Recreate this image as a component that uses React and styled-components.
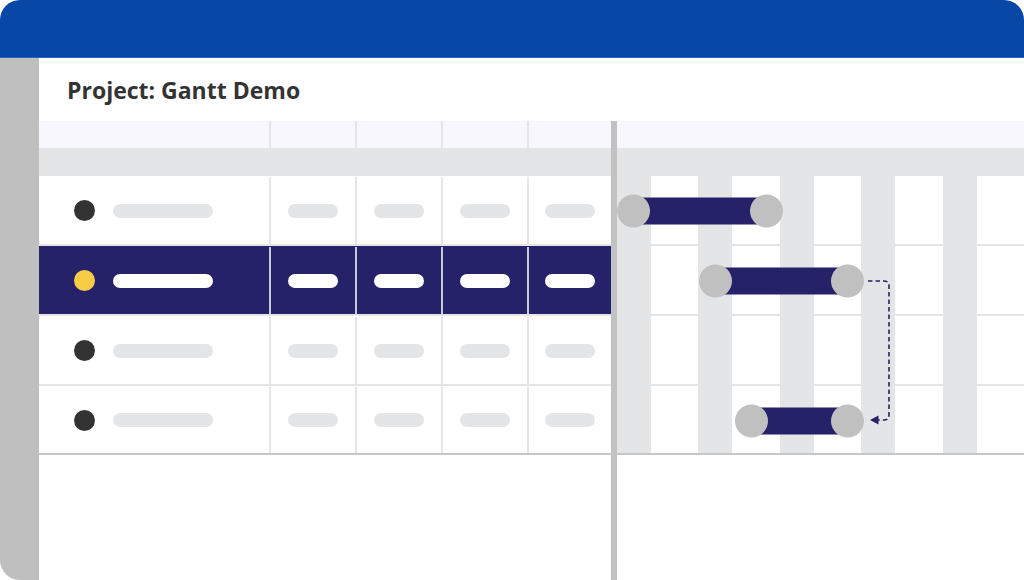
import React from "react";
import styled, { createGlobalStyle } from "styled-components";

const Global = createGlobalStyle`
  html, body { margin: 0; padding: 0; background: #ffffff; }
  body { font-family: "Open Sans", "Liberation Sans", sans-serif; }
  * { box-sizing: border-box; }
`;

const NAVY = "#25226a";
const LINE = "#e4e5e7";
const DARK_LINE = "#c7c7c7";
const KNOB = "#c0c0c0";

const Card = styled.div`
  width: 1024px;
  height: 580px;
  display: flex;
  flex-direction: column;
  border-radius: 20px 20px 0 20px;
  overflow: hidden;
  background: #ffffff;
`;

const TopBar = styled.header`
  height: 58px;
  flex: none;
  background: #0747a6;
  border-bottom: 1px solid #2a62b8;
`;

const Body = styled.div`
  flex: 1;
  display: flex;
  min-height: 0;
`;

const Sidebar = styled.aside`
  width: 39px;
  flex: none;
  background: #bfbfbf;
`;

const Main = styled.main`
  flex: 1;
  display: flex;
  flex-direction: column;
  min-width: 0;
`;

const TitleBar = styled.div`
  height: 63px;
  flex: none;
  display: flex;
  align-items: center;
  padding-left: 28px;
`;

const Title = styled.h1`
  margin: 0;
  font-family: "Open Sans", "Liberation Sans", sans-serif;
  font-weight: 700;
  font-size: 23px;
  line-height: 30px;
  color: #333333;
`;

const Workspace = styled.div`
  flex: 1;
  display: flex;
  min-height: 0;
`;

const TablePanel = styled.section`
  width: 572px;
  flex: none;
  display: flex;
  flex-direction: column;
`;

const Splitter = styled.div`
  width: 6px;
  flex: none;
  background: #c2c2c2;
`;

const GanttPanel = styled.section`
  flex: 1;
  display: flex;
  flex-direction: column;
  min-width: 0;
`;

const COLS = "230px 86px 86px 86px 84px";

const HeadRow = styled.div`
  height: 27px;
  flex: none;
  background: #f8f7fd;
  display: ${(p) => (p.$grid ? "grid" : "block")};
  grid-template-columns: ${COLS};
`;

const HeadCell = styled.div`
  border-left: ${(p) => (p.$first ? "none" : `2px solid ${LINE}`)};
`;

const SubHead = styled.div`
  height: 28px;
  flex: none;
  background: ${LINE};
`;

const Row = styled.div`
  height: ${(p) => (p.$last ? "69px" : "70px")};
  flex: none;
  display: grid;
  grid-template-columns: ${COLS};
  background: ${(p) => (p.$selected ? NAVY : "#ffffff")};
  border-bottom: 2px solid ${(p) => (p.$last ? DARK_LINE : LINE)};
  padding-top: 1px;
`;

const Cell = styled.div`
  display: flex;
  align-items: center;
  justify-content: center;
  border-left: 2px solid ${(p) => (p.$selected ? "#c9c8d8" : LINE)};
`;

const NameCell = styled.div`
  display: flex;
  align-items: center;
  padding-left: 35px;
  gap: 18px;
`;

const Dot = styled.span`
  width: 21px;
  height: 21px;
  border-radius: 50%;
  background: ${(p) => (p.$selected ? "#f8cd45" : "#333333")};
`;

const Pill = styled.span`
  width: ${(p) => p.$w}px;
  height: 14px;
  border-radius: 7px;
  background: ${(p) => (p.$selected ? "#ffffff" : LINE)};
`;

const GanttBody = styled.div`
  position: relative;
  display: flex;
  flex-direction: column;
  background: repeating-linear-gradient(
    to right,
    ${LINE} 0 34px,
    #ffffff 34px 81.4px
  );
`;

const GanttRow = styled.div`
  position: relative;
  height: ${(p) => (p.$last ? "69px" : "70px")};
  border-bottom: 2px solid ${(p) => (p.$last ? DARK_LINE : LINE)};
`;

const Bar = styled.div`
  position: absolute;
  top: calc(50% + 1px);
  transform: translateY(-50%);
  height: 33px;
  display: flex;
  align-items: center;
`;

const Knob = styled.span`
  position: relative;
  z-index: 1;
  width: 33px;
  height: 33px;
  flex: none;
  border-radius: 50%;
  background: ${KNOB};
`;

const Band = styled.span`
  flex: 1;
  height: 27px;
  margin: 0 -17px;
  background: ${NAVY};
`;

const Connector = styled.svg`
  position: absolute;
  left: 0;
  top: 0;
  overflow: visible;
  pointer-events: none;
`;

const rows = [
  { bar: { start: 0, width: 166 } },
  { selected: true, bar: { start: 82, width: 165 } },
  {},
  { bar: { start: 118, width: 129 } },
];

export default function App() {
  return (
    <>
      <Global />
      <Card>
        <TopBar />
        <Body>
          <Sidebar />
          <Main>
            <TitleBar>
              <Title>Project: Gantt Demo</Title>
            </TitleBar>
            <Workspace>
              <TablePanel>
                <HeadRow $grid>
                  <HeadCell $first />
                  <HeadCell />
                  <HeadCell />
                  <HeadCell />
                  <HeadCell />
                </HeadRow>
                <SubHead />
                {rows.map((r, i) => (
                  <Row key={i} $selected={r.selected} $last={i === rows.length - 1}>
                    <NameCell>
                      <Dot $selected={r.selected} />
                      <Pill $w={100} $selected={r.selected} />
                    </NameCell>
                    {[0, 1, 2, 3].map((c) => (
                      <Cell key={c} $selected={r.selected}>
                        <Pill $w={50} $selected={r.selected} />
                      </Cell>
                    ))}
                  </Row>
                ))}
              </TablePanel>
              <Splitter />
              <GanttPanel>
                <HeadRow />
                <SubHead />
                <GanttBody>
                  {rows.map((r, i) => (
                    <GanttRow key={i} $last={i === rows.length - 1}>
                      {r.bar && (
                        <Bar style={{ left: r.bar.start, width: r.bar.width }}>
                          <Knob />
                          <Band />
                          <Knob />
                        </Bar>
                      )}
                    </GanttRow>
                  ))}
                  <Connector width="300" height="260" viewBox="0 0 300 260">
                    <path
                      d="M251 105 H267 Q272 105 272 110 V239 Q272 244 267 244 H261"
                      fill="none"
                      stroke={NAVY}
                      strokeWidth="1.6"
                      strokeDasharray="4.5 3"
                    />
                    <path d="M253 244 L261.5 239.5 L261.5 248.5 Z" fill={NAVY} />
                  </Connector>
                </GanttBody>
              </GanttPanel>
            </Workspace>
          </Main>
        </Body>
      </Card>
    </>
  );
}
